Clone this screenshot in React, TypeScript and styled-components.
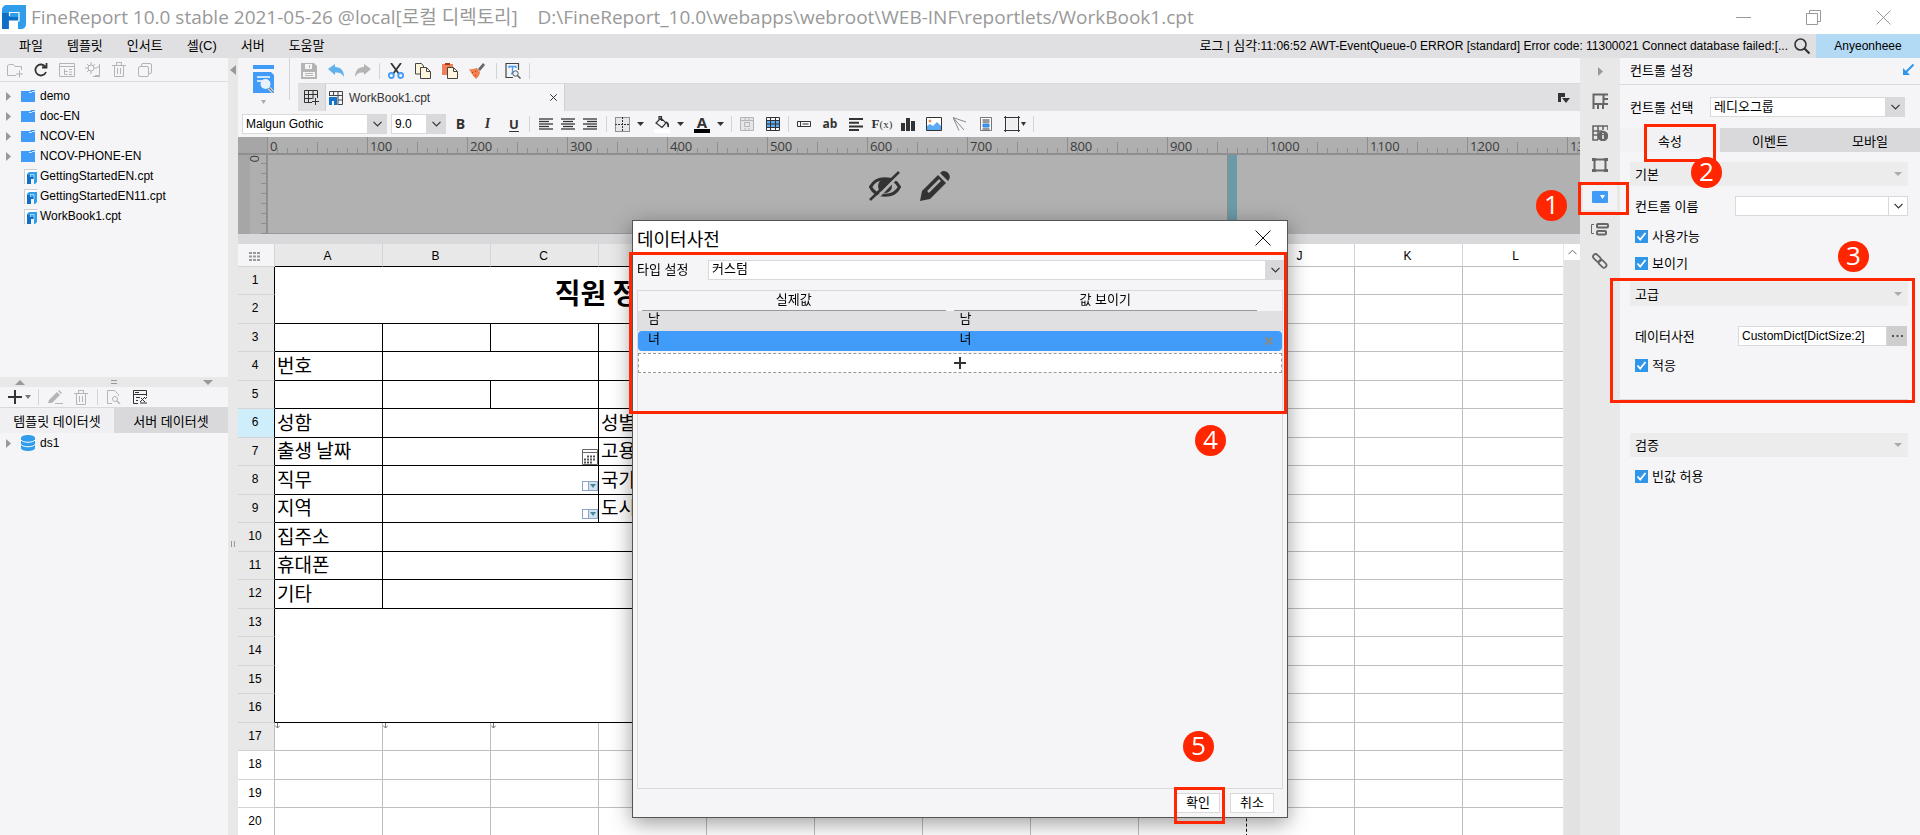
import React from "react";
import styled, { createGlobalStyle, css } from "styled-components";

const ui = `"Liberation Sans", "Noto Sans CJK KR", sans-serif`;
const malgun = `"Open Sans", "Noto Sans CJK KR", sans-serif`;

const GlobalStyle = createGlobalStyle`
  * { box-sizing: border-box; }
  body { margin: 0; font-family: ${ui}; font-size: 12px; color: #000; overflow: hidden; }
  button, input, select { font: inherit; color: inherit; margin: 0; }
  button { padding: 0; border: 0; background: none; }
  svg { display: block; flex: none; }
`;

/* ---------- shell ---------- */

const Shell = styled.div`
  display: flex;
  flex-direction: column;
  height: 100vh;
  background: #f5f5f7;
  overflow: hidden;
`;

const TitleBar = styled.header`
  display: flex;
  flex: none;
  align-items: center;
  height: 34px;
  padding-left: 2px;
  background: #fff;
  color: #999;
`;

const WindowTitle = styled.h1`
  flex: 1;
  margin: 0 0 0 5px;
  font-family: ${malgun};
  font-size: 19px;
  font-weight: 400;
  line-height: 34px;
  white-space: pre;
`;

const WindowButton = styled.button`
  display: flex;
  align-items: center;
  justify-content: center;
  width: 70px;
  height: 32px;
  color: #999;
  &:last-child { margin-right: 2px; }
`;

const MenuBar = styled.nav`
  display: flex;
  flex: none;
  align-items: center;
  height: 24px;
  padding-left: 7px;
  background: #e0e0e2;
`;

const MenuItem = styled.button`
  padding: 0 12px;
  font-size: 13px;
  line-height: 22px;
`;

const LogText = styled.span`
  margin-left: auto;
  line-height: 22px;
  b { font-size: 13px; font-weight: 400; }
`;

const SearchButton = styled.button`
  display: flex;
  align-items: center;
  justify-content: center;
  width: 28px;
  height: 24px;
  color: #333;
`;

const UserButton = styled.button`
  width: 104px;
  height: 24px;
  background: #b2daf4;
`;

const Body = styled.div`
  display: flex;
  flex: 1;
  min-height: 0;
`;

/* ---------- shared controls ---------- */

const Bar = styled.div<{ $h: number; $pad?: number }>`
  display: flex;
  flex: none;
  align-items: center;
  height: ${(p) => p.$h}px;
  padding-left: ${(p) => p.$pad ?? 0}px;
`;

const ToolButton = styled.button<{ $w?: number; $tone?: string; $gap?: number }>`
  display: flex;
  flex: none;
  align-items: center;
  justify-content: center;
  gap: ${(p) => p.$gap ?? 7}px;
  width: ${(p) => p.$w ?? 26}px;
  height: 22px;
  color: ${(p) => p.$tone ?? "#333"};
`;

const NewTabButton = styled.button`
  display: flex;
  align-items: center;
  justify-content: center;
  width: 27px;
  color: #333;
`;

const Divider = styled.i<{ $h?: number; $gap?: number }>`
  flex: none;
  width: 1px;
  height: ${(p) => p.$h ?? 16}px;
  margin: 0 ${(p) => p.$gap ?? 3}px;
  background: #d4d4d6;
`;

const SelectFrame = styled.div<{ $w?: number; $plain?: boolean; $korean?: boolean }>`
  position: relative;
  display: flex;
  flex: ${(p) => (p.$w ? "none" : "1")};
  width: ${(p) => (p.$w ? p.$w + "px" : "auto")};
  height: 20px;
  border: 1px solid #d9d9db;
  background: #fff;
  select {
    width: 100%;
    padding: 0 22px ${(p) => (p.$korean ? 2 : 0)}px 3px;
    border: 0;
    outline: 0;
    appearance: none;
    background: none;
    font-size: ${(p) => (p.$korean ? 13 : 12)}px;
  }
  span {
    position: absolute;
    top: 0;
    right: 0;
    display: flex;
    align-items: center;
    justify-content: center;
    width: 19px;
    height: 18px;
    pointer-events: none;
    background: ${(p) => (p.$plain ? "#fff" : "#d9d9db")};
    border-left: 1px solid #d9d9db;
  }
`;

function Select(props: { label: string; value: string; w?: number; plain?: boolean; korean?: boolean }) {
  return (
    <SelectFrame $w={props.w} $plain={props.plain} $korean={props.korean}>
      <select aria-label={props.label}>
        <option>{props.value}</option>
      </select>
      <span>
        <svg width="9" height="6" viewBox="0 0 9 6" fill="none" stroke="#333" strokeWidth="1.2">
          <path d="M.5.8 4.5 4.8 8.5.8" />
        </svg>
      </span>
    </SelectFrame>
  );
}

/* ---------- callouts ---------- */

const Callout = styled.b<{ $x: number; $y: number }>`
  position: absolute;
  left: ${(p) => p.$x}px;
  top: ${(p) => p.$y}px;
  z-index: 5;
  width: 31px;
  height: 31px;
  border-radius: 50%;
  background: #ff2600;
  color: #fff;
  font-family: ${malgun};
  font-size: 26px;
  font-weight: 400;
  line-height: 29px;
  text-align: center;
`;

const Outline = styled.i<{ $x: number; $y: number; $w: number; $h: number }>`
  position: absolute;
  left: ${(p) => p.$x}px;
  top: ${(p) => p.$y}px;
  z-index: 4;
  width: ${(p) => p.$w}px;
  height: ${(p) => p.$h}px;
  border: 3px solid #ff2600;
  pointer-events: none;
`;

/* ---------- left side ---------- */

const LeftPane = styled.aside`
  display: flex;
  flex: none;
  flex-direction: column;
  width: 228px;
`;

const Tree = styled.ul`
  flex: none;
  height: 296px;
  margin: 0;
  padding: 4px 0 0;
  border-top: 1px solid #dcdcde;
  list-style: none;
`;

const TreeRow = styled.li`
  display: flex;
  align-items: center;
  height: 20px;
  padding-left: 6px;
`;

const Twisty = styled.span`
  width: 15px;
`;

const NodeIcon = styled.span<{ $file?: boolean }>`
  width: 19px;
  padding-left: ${(p) => (p.$file ? 3 : 0)}px;
`;

const Splitter = styled.div`
  display: flex;
  flex: none;
  align-items: center;
  justify-content: space-between;
  height: 10px;
  padding: 0 15px;
  background: #e8e8e8;
`;

const SideTabs = styled.div`
  display: flex;
  height: 26px;
  border-top: 1px solid #d9d9db;
`;

const SideTab = styled.button<{ $on?: boolean }>`
  flex: 1;
  background: ${(p) => (p.$on ? "#f0f0f2" : "#d9d9db")};
  font-size: 13px;
`;

const Gutter = styled.div`
  display: flex;
  flex: none;
  flex-direction: column;
  align-items: center;
  justify-content: space-between;
  width: 10px;
  padding: 7px 0 288px;
  background: #e8e8e8;
`;

/* ---------- workspace ---------- */

const Workspace = styled.main`
  display: flex;
  flex: 1;
  flex-direction: column;
  min-width: 0;
  overflow: hidden;
`;

const TopTools = styled.div`
  display: flex;
  flex: none;
  height: 53px;
`;

const PreviewButton = styled.button`
  display: flex;
  flex: none;
  flex-direction: column;
  align-items: center;
  gap: 7px;
  width: 51px;
  height: 53px;
  padding: 7px 0 0 0;
`;

const TopRight = styled.div`
  display: flex;
  flex: 1;
  flex-direction: column;
  min-width: 0;
  margin-left: 8px;
`;

const Tabs = styled.div`
  display: flex;
  height: 28px;
  border-top: 1px solid #d9d9db;
  background: #e0e0e2;
`;

const FileTab = styled.div`
  display: flex;
  align-items: center;
  gap: 6px;
  width: 240px;
  padding: 0 7px 0 3px;
  border: solid #cfcfd1;
  border-width: 0 1px;
  background: #f5f5f7;
  color: #333;
  button { margin-left: auto; }
`;

const TabEnd = styled.button`
  margin: 0 10px 0 auto;
`;

const FontSize = styled.div`
  display: flex;
  margin: 0 1px 0 4px;
`;

const Glyph = styled.span<{ $serif?: boolean; $italic?: boolean; $under?: boolean; $size?: number }>`
  font-family: ${(p) => (p.$serif ? `"Liberation Serif", serif` : `"Open Sans", sans-serif`)};
  font-size: ${(p) => p.$size ?? 13}px;
  font-style: ${(p) => (p.$italic ? "italic" : "normal")};
  font-weight: 700;
  line-height: 16px;
  text-decoration: ${(p) => (p.$under ? "underline" : "none")};
  text-underline-offset: 2px;
  small { font-size: 11px; font-weight: 400; }
`;

const InkStack = styled.span<{ $ink: string }>`
  display: flex;
  flex-direction: column;
  align-items: center;
  justify-content: center;
  width: 16px;
  height: 17px;
  border-bottom: 4px solid ${(p) => p.$ink};
`;

const Canvas = styled.section`
  position: relative;
  display: flex;
  flex: none;
  flex-direction: column;
  height: 97px;
  background: #b1b1b1;
`;

const Ruler = styled.div`
  display: flex;
  height: 18px;
  padding-left: 29px;
  background: linear-gradient(90deg, #a6a6a6 29px, #afafaf 29px);
  border-bottom: 2px solid #8f8f8f;
  overflow: hidden;
`;

const RulerMark = styled.span`
  flex: none;
  width: 100px;
  height: 16px;
  padding-left: 3px;
  background:
    linear-gradient(#8e8e8e, #8e8e8e) 0 0 / 1px 16px no-repeat,
    linear-gradient(#8e8e8e, #8e8e8e) 50px 100% / 1px 11px no-repeat,
    repeating-linear-gradient(90deg, #8e8e8e 0 1px, transparent 1px 10px) 0 100% / 100px 5px no-repeat;
  color: #3c3c3c;
  font-family: ${malgun};
  font-size: 13px;
  line-height: 18px;
`;

const CanvasBody = styled.div`
  display: flex;
  flex: 1;
`;

const SideRuler = styled.div`
  display: flex;
  align-items: flex-start;
  justify-content: flex-end;
  width: 30px;
  padding-right: 3px;
  border-right: 2px solid #8f8f8f;
  background:
    repeating-linear-gradient(#afafaf00 0 8px, #8e8e8e 8px 9px, #afafaf00 9px 10px) 100% 0 / 5px 100% no-repeat,
    linear-gradient(90deg, #a6a6a6 12px, #afafaf 12px);
  color: #3c3c3c;
  font-family: ${malgun};
  font-size: 13px;
  line-height: 16px;
  span { writing-mode: vertical-rl; }
`;

const Paper = styled.div`
  width: 960px;
  border-right: 1px solid #8f8f8f;
  border-bottom: 1px solid #999;
`;

const PaperEdge = styled.div`
  width: 9px;
  background: #6b9ba9;
`;

const CanvasActions = styled.div`
  position: absolute;
  inset: 0;
  display: flex;
  align-items: center;
  justify-content: center;
  gap: 19px;
  color: #333;
`;

const Sheet = styled.section`
  display: flex;
  flex: 1;
  min-height: 0;
  border-top: 10px solid #d9d9db;
  background: #fff;
`;

const SheetView = styled.div`
  flex: 1;
  min-width: 0;
  overflow: hidden;
`;

const GridTable = styled.table`
  width: 1333px;
  border-collapse: separate;
  border-spacing: 0;
  table-layout: fixed;
`;

const ColHead = styled.th<{ $used?: boolean; $ink?: boolean }>`
  height: 23px;
  padding: 2px 2px 0 0;
  border-right: 1px solid #d4d4d6;
  border-bottom: 1px solid ${(p) => (p.$ink ? "#000" : "#bdbdbd")};
  background: ${(p) => (p.$used ? "#e8e8e8" : "#fff")};
  font-size: 12px;
  font-weight: 400;
`;

const CornerHead = styled.th`
  width: 37px;
  padding: 3px 0 0 11px;
  border-right: 1px solid #d4d4d6;
  border-bottom: 1px solid #d4d4d6;
  background: #f5f5f7;
`;

const RowHead = styled.th<{ $state: "used" | "active" | "free"; $ink?: boolean; $tall?: boolean }>`
  height: ${(p) => (p.$tall ? 29 : 28)}px;
  padding: 0 2px 2px 0;
  border-right: 1px solid ${(p) => (p.$ink ? "#000" : "#bdbdbd")};
  border-bottom: 1px solid #d4d4d6;
  background: ${(p) => ({ used: "#e8e8e8", active: "#cfeefc", free: "#fff" })[p.$state]};
  font-size: 12px;
  font-weight: 400;
`;

const Cell = styled.td<{ $ink?: boolean; $title?: boolean; $edge?: boolean; $top?: boolean; $widget?: boolean }>`
  padding: 0 0 3px 2px;
  border: solid ${(p) => (p.$ink ? "#000" : "#bdbdbd")};
  border-width: 0 1px 1px 0;
  overflow: hidden;
  font-family: "Noto Sans CJK KR", sans-serif;
  font-size: 19px;
  line-height: 24px;
  white-space: nowrap;
  ${(p) => p.$edge && css`border-right: 1px dashed #000;`}
  ${(p) => p.$top && css`padding: 0; vertical-align: top;`}
  ${(p) => p.$widget && css`padding: 0; vertical-align: bottom; svg { margin-left: auto; }`}
  ${(p) => p.$title && css`padding: 0 4px 6px 0; font-size: 28px; font-weight: 700; line-height: 40px; text-align: center;`}
`;

const ScrollTrack = styled.div`
  flex: none;
  width: 17px;
  border-left: 1px solid #e8e8e8;
  background: #e2e2e2;
`;

const ScrollArrow = styled.button`
  display: flex;
  align-items: center;
  justify-content: center;
  width: 16px;
  height: 16px;
  background: #fff;
`;

/* ---------- right side ---------- */

const Rail = styled.nav`
  position: relative;
  z-index: 4;
  display: flex;
  flex: none;
  flex-direction: column;
  align-items: center;
  width: 40px;
  background: #e8e8e8;
`;

const RailButton = styled.button<{ $on?: boolean; $h?: number }>`
  position: relative;
  display: flex;
  align-items: center;
  justify-content: center;
  width: 40px;
  height: ${(p) => p.$h ?? 32}px;
  color: #666;
  ${(p) => p.$on && css`background: linear-gradient(#f3f3f5, #f3f3f5) 50% 50% / 34px 26px no-repeat;`}
`;

const Panel = styled.aside`
  position: relative;
  z-index: 5;
  flex: none;
  width: 300px;
  font-size: 13px;
`;

const PanelTitle = styled.h2`
  display: flex;
  align-items: center;
  justify-content: space-between;
  height: 27px;
  margin: 0;
  padding: 0 6px 3px 10px;
  border-bottom: 1px solid #d9d9db;
  font-size: 13px;
  font-weight: 400;
`;

const Field = styled.div<{ $top: number; $label: number; $indent?: number; $end?: number }>`
  display: flex;
  align-items: center;
  height: 20px;
  margin: ${(p) => p.$top}px ${(p) => p.$end ?? 0}px 0 ${(p) => p.$indent ?? 0}px;
  > label { flex: none; width: ${(p) => p.$label}px; padding-bottom: 2px; }
`;

const PanelTabs = styled.div`
  display: flex;
  height: 24px;
  margin: 11px 0 10px;
`;

const PanelTab = styled.button<{ $on?: boolean }>`
  position: relative;
  flex: 1;
  background: ${(p) => (p.$on ? "#f2f2f4" : "#d9d9db")};
`;

const Section = styled.section<{ $top?: number }>`
  position: relative;
  margin: ${(p) => p.$top ?? 0}px 12px 0 10px;
`;

const SectionHead = styled.button`
  display: flex;
  align-items: center;
  justify-content: space-between;
  width: 100%;
  height: 24px;
  padding: 0 6px 1px 5px;
  background: #ececec;
`;

const CheckLabel = styled.label<{ $top: number }>`
  display: flex;
  align-items: center;
  gap: 4px;
  height: 20px;
  margin: ${(p) => p.$top}px 0 0 5px;
  padding-bottom: 1px;
  input {
    width: 13px;
    height: 13px;
    appearance: none;
    background: #2f96ea;
    grid-area: 1 / 1;
  }
  span { display: grid; place-items: center; padding-top: 1px; }
  svg { grid-area: 1 / 1; pointer-events: none; z-index: 1; }
`;

const TextField = styled.input`
  flex: 1;
  min-width: 0;
  height: 20px;
  padding: 0 3px;
  border: 1px solid #d9d9db;
  background: #fff;
  font-size: 12px;
`;

const MoreButton = styled.button`
  display: flex;
  align-items: center;
  justify-content: center;
  width: 20px;
  height: 20px;
  background: #cecece;
`;

const Rule = styled.hr`
  height: 1px;
  margin: 24px 0 0 -10px;
  border: 0;
  background: #d9d9db;
`;

/* ---------- dialog ---------- */

const Dialog = styled.section`
  position: fixed;
  top: 220px;
  left: calc(50% - 328px);
  z-index: 2;
  display: flex;
  flex-direction: column;
  width: 656px;
  height: 598px;
  border: 1px solid #555;
  background: #f5f5f7;
  box-shadow: 0 5px 20px rgba(0, 0, 0, 0.4);
`;

const DialogTitle = styled.h2`
  display: flex;
  flex: none;
  align-items: center;
  justify-content: space-between;
  height: 34px;
  margin: 0;
  padding: 0 16px 0 4px;
  background: #fff;
  font-family: "Noto Sans CJK KR", sans-serif;
  font-size: 18px;
  font-weight: 400;
`;

const DialogField = styled.div`
  display: flex;
  align-items: center;
  margin: 4px 2px 10px 4px;
  font-size: 13px;
  label { width: 71px; padding-bottom: 2px; }
`;

const DictBox = styled.div`
  flex: 1;
  margin: 0 4px;
  border: 1px solid #d9d9db;
`;

const DictTable = styled.table`
  width: 100%;
  border-collapse: separate;
  border-spacing: 0;
  table-layout: fixed;
  font-size: 13px;
  th {
    height: 20px;
    padding: 0 4px;
    font-weight: 400;
  }
  th span {
    display: block;
    height: 20px;
    line-height: 18px;
    border-bottom: 1px solid #999;
  }
  th:last-child { width: 21px; }
  td { height: 20px; padding: 0 0 4px 10px; line-height: 16px; }
  td:last-child { padding: 0 0 0 4px; }
`;

const DictRow = styled.tr<{ $on?: boolean }>`
  td { background: ${(p) => (p.$on ? "#419bf9" : "#e0e0e2")}; }
  ${(p) => p.$on && css`
    td:first-child { border-radius: 4px 0 0 4px; }
    td:last-child { border-radius: 0 4px 4px 0; }
  `}
`;

const AddRow = styled.button`
  display: flex;
  align-items: center;
  justify-content: center;
  width: 100%;
  height: 20px;
  margin-top: 2px;
  border: 1px dashed #999;
  background: #fff;
  color: #333;
`;

const DialogFooter = styled.footer`
  display: flex;
  flex: none;
  justify-content: flex-end;
  gap: 10px;
  padding: 4px 13px 4px;
`;

const DialogButton = styled.button`
  position: relative;
  width: 44px;
  height: 20px;
  border: 1px solid #d9d9db;
  background: #fff;
  font-size: 13px;
  line-height: 16px;
`;

/* ---------- icons ---------- */

type Kids = { children?: React.ReactNode; w?: number; h?: number; sw?: number };

function Line({ children, w = 16, h = 16, sw = 1 }: Kids) {
  return (
    <svg width={w} height={h} viewBox={`0 0 ${w} ${h}`} fill="none" stroke="currentColor" strokeWidth={sw}>
      {children}
    </svg>
  );
}

const Caret = ({ c = "#333", w = 7 }: { c?: string; w?: number }) => (
  <svg width={w} height="4" viewBox="0 0 7 4" preserveAspectRatio="none"><path d="M0 0h7L3.500 4z" fill={c} /></svg>
);

const RightTri = () => (
  <svg width="5" height="9" viewBox="0 0 5 9"><path d="M0 0 5 4.500 0 9z" fill="#999" /></svg>
);

const Logo = () => (
  <svg width="24" height="24" viewBox="0 0 24 24">
    <path d="M5 0h19v19c0 3-2 5-5 5h-3v-8H8v8H0V5c0-3 2-5 5-5z" fill="#2f9cec" />
    <path d="M0 8h7v4h9v4H8v8H0z" fill="#0f6fc6" />
    <path d="M7.500 11V7.500H17V16H7.500v8" fill="none" stroke="#fff" strokeWidth="1.2" />
  </svg>
);

const FileIcon = () => (
  <svg width="13" height="15" viewBox="0 0 13 15">
    <path d="M.5 15V.5H13" fill="#fff" stroke="#ccc" />
    <path d="M3 5l2-2h8v10l-2 2h-1v-5H7v5H3z" fill="#2f9cec" />
    <path d="M3 6h3v2h4v2H7v5H3z" fill="#0f6fc6" />
    <path d="M6.500 8V5.500H10V10" fill="none" stroke="#fff" strokeWidth=".6" />
  </svg>
);

const FolderIcon = () => (
  <svg width="14" height="12" viewBox="0 0 14 12">
    <path d="M0 1h9l1-1h4v12H0z" fill="#419bf9" />
    <path d="M8 2.500h2.500l1-1H14" stroke="#fff" strokeWidth=".8" fill="none" />
  </svg>
);

const DbIcon = () => (
  <svg width="14" height="16" viewBox="0 0 14 16">
    <path d="M0 3c0-4 14-4 14 0v10c0 4-14 4-14 0z" fill="#2f9cec" />
    <path d="M0 5c2 3 12 3 14 0M0 9.500c2 3 12 3 14 0" stroke="#fff" fill="none" />
  </svg>
);

const Trash = () => (
  <Line w={14} h={15}><path d="M0 3.500h14M4.500 3V.5h5V3M2.500 4v10.500h9V4M5.500 6v6M8.500 6v6" /></Line>
);

const AlignIcon = ({ from, to }: { from: number; to: number }) => (
  <Line w={14} h={13}>
    {[0, 1, 2, 3, 4].map((i) => (
      <path key={i} d={`M${i % 2 ? from : 0} ${i * 2.5 + 1}H${i % 2 ? to : 14}`} strokeWidth="1.3" />
    ))}
  </Line>
);

const Check = () => (
  <svg width="11" height="11" viewBox="0 0 11 11" fill="none" stroke="#fff" strokeWidth="1.8"><path d="M1.500 5.500 4.200 8.500 9.500 2" /></svg>
);

const ComboIcon = () => (
  <svg width="16" height="16" viewBox="0 0 16 16">
    <rect x=".5" y="3.500" width="15" height="9" fill="#fff" stroke="#8fa3c8" />
    <rect x="7" y="4" width="8" height="8" fill="#cfe4ee" />
    <path d="M6.500 4v8" stroke="#8fa3c8" />
    <path d="M8 6h6l-3 4z" fill="#4a8797" />
  </svg>
);

const CalendarIcon = () => (
  <svg width="16" height="16" viewBox="0 0 16 16" fill="none" stroke="#666">
    <path d="M.5.5h15v15H.5zM0 3.500h16" />
    <path d="M5 7.500h8M2 10.500h11M2 13.500h8" stroke="#555" strokeWidth="2" strokeDasharray="2 1" />
  </svg>
);

const ArrowMark = () => (
  <svg width="5" height="6" viewBox="0 0 5 6" fill="none" stroke="#777"><path d="M2.500 0v5M0 2.500l2.500 2.500L5 2.500" /></svg>
);

const CloseX = ({ s = 15, c = "currentColor", sw = 1 }: { s?: number; c?: string; sw?: number }) => (
  <svg width={s} height={s} viewBox="0 0 15 15" stroke={c} strokeWidth={(sw * 15) / s}><path d="M.5.5l14 14M14.500.5l-14 14" /></svg>
);

/* ---------- parts ---------- */

function CheckBox({ text, top }: { text: string; top: number }) {
  return (
    <CheckLabel $top={top}>
      <span><input type="checkbox" defaultChecked /><Check /></span>
      {text}
    </CheckLabel>
  );
}

function LeftSide() {
  const g = "#b4b4b4";
  return (
    <LeftPane>
      <Bar $h={23} $pad={2}>
        <ToolButton $tone={g} aria-label="New folder"><Line><path d="M9 13.500H.5v-10l2-1h4l1.500 2h6.500V8M12.500 8.500v7M9 12h7" /></Line></ToolButton>
        <ToolButton aria-label="Refresh"><Line sw={1.8}><path d="M12.500 5A5.500 5.500 0 1 0 13 10M13.500 1v4.500H9" /></Line></ToolButton>
        <ToolButton $tone={g} aria-label="Locate"><Line><path d="M.5 1.500h15v13H.5zM.5 4.500h15M5.500 7v5.500h3M5.500 9.500h3M10 7.500h3M10 10h3M10 12.500h3" /></Line></ToolButton>
        <ToolButton $tone={g} aria-label="Settings"><Line><circle cx="6" cy="6" r="3" /><path d="M6 0v3M6 9v3M0 6h3M9 6h3M2 2l2 2M10 2 8 4M2 10l2-2M14.500 2v11.500H10M12 5h2M8 14.500h7" /></Line></ToolButton>
        <ToolButton $tone={g} aria-label="Delete"><Trash /></ToolButton>
        <ToolButton $tone={g} aria-label="Copy"><Line w={14} h={14}><path d="M3.500 3V2q0-1.500 1.500-1.500h7q1.500 0 1.500 1.500v7q0 1.500-1.500 1.500h-1" /><rect x=".5" y="3.500" width="10" height="10" rx="1.500" /></Line></ToolButton>
      </Bar>
      <Tree>
        {["demo", "doc-EN", "NCOV-EN", "NCOV-PHONE-EN"].map((n) => (
          <TreeRow key={n}><Twisty><RightTri /></Twisty><NodeIcon><FolderIcon /></NodeIcon>{n}</TreeRow>
        ))}
        {["GettingStartedEN.cpt", "GettingStartedEN11.cpt", "WorkBook1.cpt"].map((n) => (
          <TreeRow key={n}><Twisty /><NodeIcon $file><FileIcon /></NodeIcon>{n}</TreeRow>
        ))}
      </Tree>
      <Splitter>
        <svg width="10" height="5" viewBox="0 0 10 5"><path d="M0 5h10L5 0z" fill="#999" /></svg>
        <Line w={6} h={4}><path d="M0 .5h6M0 3.500h6" stroke="#999" /></Line>
        <svg width="10" height="5" viewBox="0 0 10 5"><path d="M0 0h10L5 5z" fill="#999" /></svg>
      </Splitter>
      <Bar $h={20} $pad={4}>
        <ToolButton $w={31} $gap={3} aria-label="Add dataset">
          <Line w={14} h={14} sw={2}><path d="M7 0v14M0 7h14" /></Line>
          <Caret c="#777" w={6} />
        </ToolButton>
        <Divider />
        <ToolButton $tone={g} aria-label="Edit">
          <svg width="15" height="14" viewBox="0 0 15 14" fill="currentColor"><path d="M1 10 9 2l3 3-8 8H0zM10 1l1-1 3 3-1 1zM7 13h8v1H7z" /></svg>
        </ToolButton>
        <ToolButton $tone={g} aria-label="Remove"><Trash /></ToolButton>
        <Divider />
        <ToolButton $tone={g} aria-label="Preview"><Line w={14} h={14}><path d="M5 13.500H.5V.5h7l4 4V6" /><circle cx="8" cy="9" r="2.500" /><path d="m10 11 3 3" strokeWidth="1.5" /></Line></ToolButton>
        <ToolButton aria-label="Connection"><Line w={15} h={14}><path d="M5 13.500H.5V.5h13V6M.5 4.500h13M2 2.500h4M3 7.500h4M3 10.500h2M7 12l5-5M8 8l4 4M12 9l2-2M7 13h7" /></Line></ToolButton>
      </Bar>
      <SideTabs>
        <SideTab $on>템플릿 데이터셋</SideTab>
        <SideTab>서버 데이터셋</SideTab>
      </SideTabs>
      <TreeRow as="div"><Twisty><RightTri /></Twisty><NodeIcon><DbIcon /></NodeIcon>ds1</TreeRow>
    </LeftPane>
  );
}

function QuickTools() {
  return (
    <Bar $h={25}>
      <ToolButton $w={22} aria-label="Save"><svg width="16" height="16" viewBox="0 0 16 16"><path d="M0 0h13l3 3v13H0z" fill="#b4b4b4" /><path d="M4 1h7v5H4zM2 9h12v5H2z" fill="#f5f5f7" /><path d="M8.500 2v3M4 10.500h8M4 12.500h8" stroke="#b4b4b4" /></svg></ToolButton>
      <ToolButton $w={32} aria-label="Undo"><svg width="16" height="14" viewBox="0 0 16 14"><path d="M0 5 7 0v3c6 0 9 4 9 10-2-4-5-5-9-4.500V11z" fill="#62b0ee" /></svg></ToolButton>
      <ToolButton $w={22} aria-label="Redo"><svg width="16" height="14" viewBox="0 0 16 14"><path d="M16 5 9 0v3C3 3 0 7 0 13c2-4 5-5 9-4.500V11z" fill="#b4b4b4" /></svg></ToolButton>
      <Divider $gap={5} />
      <ToolButton $w={22} aria-label="Cut"><svg width="16" height="16" viewBox="0 0 16 16" fill="none"><path d="m3 0 8 11M13 0 5 11" stroke="#333" strokeWidth="1.8" /><circle cx="3.300" cy="12.500" r="2.500" stroke="#419bf9" strokeWidth="1.8" /><circle cx="12.700" cy="12.500" r="2.500" stroke="#419bf9" strokeWidth="1.8" /></svg></ToolButton>
      <ToolButton $w={32} aria-label="Copy"><svg width="16" height="16" viewBox="0 0 16 16" fill="#fff6dd" stroke="#444"><path d="M.5.5h6l2 2.500v8H.5z" /><path d="M5.500 4.500h6l4 4v7h-10z" /><path d="M11.500 5v3.500H15" fill="none" /></svg></ToolButton>
      <ToolButton $w={22} aria-label="Paste"><svg width="16" height="16" viewBox="0 0 16 16"><path d="M0 1h11v11H0z" fill="#f08058" /><path d="M3 0h5v2H3z" fill="#a83c10" /><path d="M5.500 4.500h6l4 4v7h-10z" fill="#fff6dd" stroke="#444" /><path d="M11.500 5v3.500H15" fill="none" stroke="#444" /></svg></ToolButton>
      <ToolButton $w={32} aria-label="Format painter"><svg width="16" height="16" viewBox="0 0 16 16"><path d="m14 0 2 2-5 6-2-2z" fill="#666" /><path d="M0 6c4 1 6-1 8-1l3 4c0 3-2 5-4 7C4 13 2 10 0 6z" fill="#f08050" /><path d="m3 9 1 1M6 8l1 1M6 12l1 1" stroke="#a83c10" /></svg></ToolButton>
      <Divider $gap={3} />
      <ToolButton aria-label="Find"><svg width="16" height="16" viewBox="0 0 16 16" fill="none"><path d="M13.500 7V.5H1v14h7" stroke="#444" strokeWidth="1.2" /><path d="M4 5V3.500h7V5M7.500 3.500v7M6 10.500h3" stroke="#419bf9" strokeWidth="1.3" /><circle cx="10.500" cy="10.500" r="2.700" stroke="#555" fill="#eef" /><path d="m12.500 12.500 3 3" stroke="#555" strokeWidth="1.5" /></svg></ToolButton>
      <Divider />
    </Bar>
  );
}

function FormatTools() {
  return (
    <Bar $h={26} $pad={4}>
      <Select label="Font" value="Malgun Gothic" w={145} />
      <FontSize><Select label="Font size" value="9.0" w={55} /></FontSize>
      <ToolButton $w={27} aria-label="Bold"><Glyph $size={14}>B</Glyph></ToolButton>
      <ToolButton $w={27} aria-label="Italic"><Glyph $serif $italic $size={14}>I</Glyph></ToolButton>
      <ToolButton aria-label="Underline"><Glyph $under>U</Glyph></ToolButton>
      <Divider $gap={2} />
      <ToolButton $w={28} aria-label="Align left"><AlignIcon from={0} to={10} /></ToolButton>
      <ToolButton $w={16} aria-label="Align center"><AlignIcon from={2} to={12} /></ToolButton>
      <ToolButton $w={28} aria-label="Align right"><AlignIcon from={4} to={14} /></ToolButton>
      <Divider $gap={2} />
      <ToolButton $w={40} aria-label="Borders"><Line w={15} h={15}><path d="M.5.5h14v14H.5z" fill="#e6e6e8" strokeDasharray="1 1" /><path d="M7.500 0v15M0 7.500h15" strokeDasharray="2 1" /></Line><Caret /></ToolButton>
      <ToolButton $w={40} aria-label="Fill">
        <InkStack $ink="#fff"><Line w={14} h={12} sw={1.2}><path d="M1 7 6 2l5 5-4 4.500zM4 4V.600h2.500V5" /><path d="M11 6c2 1 2.500 3 2 5" strokeWidth="1.8" /></Line></InkStack><Caret />
      </ToolButton>
      <ToolButton $w={40} aria-label="Font color"><InkStack $ink="#000"><Glyph $size={15}>A</Glyph></InkStack><Caret /></ToolButton>
      <Divider $gap={2} />
      <ToolButton $tone="#b4b4b4" aria-label="Merge"><Line w={14} h={14}><path d="M.5.5h13v13H.5zM0 3.500h14M5 1v2M9 1v2M5 11v2M9 11v2M4.500 5.500h5v4h-5z" fill="#e6e6e8" /></Line></ToolButton>
      <ToolButton aria-label="Table"><Line w={14} h={14}><path d="M0 4h14v6H0z" fill="#5aaaf4" stroke="none" /><path d="M.5.5h13v13H.5zM0 3.500h14M0 7h14M0 10.500h14M4.500 0v14M9.500 0v14" /></Line></ToolButton>
      <Divider $gap={2} />
      <ToolButton aria-label="Control"><Line w={14} h={6}><path d="M.5.5h13v5H.5zM3.500 1v4M5.500 3h6" /></Line></ToolButton>
      <ToolButton aria-label="Text"><Glyph $size={12}>ab</Glyph></ToolButton>
      <ToolButton aria-label="Rich text"><Line w={14} h={13} sw={2}><path d="M0 1h14M0 4.700h10M0 8.400h14M0 12h10" /></Line></ToolButton>
      <ToolButton aria-label="Formula"><Glyph $serif $size={13}>F<small>(x)</small></Glyph></ToolButton>
      <ToolButton aria-label="Chart"><svg width="14" height="13" viewBox="0 0 14 13" fill="#333"><path d="M0 5h4v8H0zM5 0h4v13H5zM10 3h4v10h-4z" /></svg></ToolButton>
      <ToolButton aria-label="Image"><svg width="16" height="14" viewBox="0 0 16 14"><path d="M.5.500h15v13H.5z" fill="#fff" stroke="#333" /><path d="M1 13V9l3-2 3 2 4-4 4 4v4z" fill="#5aaaf4" /><circle cx="4" cy="4" r="1.500" fill="#f09060" /></svg></ToolButton>
      <ToolButton $tone="#888" aria-label="Slope line"><Line w={14} h={14}><path d="M13 5 0 .5 11 13M0 .5l6 13" /></Line></ToolButton>
      <ToolButton aria-label="Sub report"><svg width="12" height="14" viewBox="0 0 12 14" fill="none" stroke="#333"><path d="M.5.500h11v13H.5z" fill="#fff" stroke="#777" /><path d="M2.500 3h7M2.500 5h7M2.500 12h7" /><path d="M3 7h6v3H3z" fill="#419bf9" stroke="#2f7fd8" /></svg></ToolButton>
      <ToolButton $w={31} $gap={1} aria-label="Float"><Line w={16} h={16}><path d="M3 3h10v10H3z" fill="#eee" stroke="none" /><path d="M1.500 0v16M14.500 0v16M0 1.500h16M0 14.500h16" /></Line><Caret w={5} /></ToolButton>
      <Divider />
    </Bar>
  );
}

const labels: Record<number, [string, string?]> = {
  4: ["번호"],
  6: ["성함", "성별"],
  7: ["출생 날짜", "고용"],
  8: ["직무", "국가"],
  9: ["지역", "도시"],
  10: ["집주소"],
  11: ["휴대폰"],
  12: ["기타"],
};

/* Plain cells to the right of the report body, up to column L. */
function Rest({ from = 6 }: { from?: number }) {
  return <>{Array.from({ length: 12 - from }, (_, i) => <Cell key={i} $edge={i + from === 8} />)}</>;
}

function ReportCells({ n }: { n: number }) {
  if (n === 1) return <><Cell $ink $title colSpan={6} rowSpan={2}>직원 정</Cell><Rest /></>;
  if (n === 2 || (n > 13 && n < 17)) return <Rest />;
  if (n === 3 || n === 5) return <>{[0, 1, 2, 3, 4, 5].map((i) => <Cell key={i} $ink />)}<Rest /></>;
  if (n === 13) return <><Cell $ink colSpan={6} rowSpan={4} /><Rest /></>;
  if (n === 17) return <>{[0, 1, 2].map((i) => <Cell key={i} $top><ArrowMark /></Cell>)}<Rest from={3} /></>;
  if (n > 17) return <Rest from={0} />;
  const [a, d] = labels[n];
  if (n >= 10) return <><Cell $ink>{a}</Cell><Cell $ink colSpan={5} /><Rest /></>;
  return (
    <>
      <Cell $ink>{a}</Cell>
      <Cell $ink $widget colSpan={2}>{n === 7 ? <CalendarIcon /> : n === 8 || n === 9 ? <ComboIcon /> : null}</Cell>
      <Cell $ink>{d}</Cell>
      <Cell $ink colSpan={2} />
      <Rest />
    </>
  );
}

function Spreadsheet() {
  const rows = Array.from({ length: 20 }, (_, i) => i + 1);
  return (
    <Sheet>
      <SheetView>
        <GridTable>
          <thead>
            <tr>
              <CornerHead><svg width="11" height="9" viewBox="0 0 11 9"><path d="M0 1h11M0 4.500h11M0 8h11" stroke="#999" strokeWidth="2" strokeDasharray="3 1" /></svg></CornerHead>
              {"ABCDEFGHIJKL".split("").map((c, i) => <ColHead key={c} $used={i < 9} $ink={i < 6}>{c}</ColHead>)}
            </tr>
          </thead>
          <tbody>
            {rows.map((n) => (
              <tr key={n}>
                <RowHead $tall={n % 2 === 0} $ink={n < 17} $state={n === 6 ? "active" : n < 18 ? "used" : "free"}>{n}</RowHead>
                <ReportCells n={n} />
              </tr>
            ))}
          </tbody>
        </GridTable>
      </SheetView>
      <ScrollTrack><ScrollArrow aria-label="Scroll up"><Line w={9} h={6}><path d="M.5 5.200l4-4 4 4" stroke="#666" /></Line></ScrollArrow></ScrollTrack>
    </Sheet>
  );
}

function Designer() {
  return (
    <Workspace>
      <TopTools>
        <PreviewButton aria-label="Preview report">
          <svg width="21" height="28" viewBox="0 0 21 28"><path d="M0 0h21v4H0zM0 7h18l3 3v18H0z" fill="#419bf9" /><path d="M4 12h13M4 16h5" stroke="#fff" strokeWidth="1.5" /><circle cx="12.500" cy="19" r="5" fill="#e8f2fa" /><path d="m16 23 4 4" stroke="#fff" strokeWidth="3" /><path d="m16 23 4 4" stroke="#777" strokeWidth="1.5" /></svg>
          <Caret c="#aaa" w={5} />
        </PreviewButton>
        <Divider $h={42} $gap={0} />
        <TopRight>
          <QuickTools />
          <Tabs>
            <NewTabButton aria-label="New workbook"><Line w={15} h={15}><path d="M8 12.500H.5v-12h13V8M.5 4.500h13M.5 8.500h8M4.500 0v13M9 0v9M11.500 8v7M8 11.500h7" /></Line></NewTabButton>
            <FileTab>
              <svg width="14" height="14" viewBox="0 0 14 14"><path d="M.5 5V.5h13v13H9M.5 4.500h13M9 9h5M4.500 0v5M9 0v14" fill="none" stroke="#444" /><path d="M0 6h8v8H5v-4H3v4H0z" fill="#1274cc" /></svg>
              WorkBook1.cpt
              <button aria-label="Close tab"><CloseX s={7} c="#333" /></button>
            </FileTab>
            <TabEnd aria-label="Tab list"><svg width="12" height="10" viewBox="0 0 12 10" fill="#333"><path d="M0 0h7v4H3v5H0zM4 5h8L8 10z" /></svg></TabEnd>
          </Tabs>
        </TopRight>
      </TopTools>
      <FormatTools />
      <Canvas>
        <Ruler>{Array.from({ length: 14 }, (_, i) => <RulerMark key={i}>{i * 100}</RulerMark>)}</Ruler>
        <CanvasBody>
          <SideRuler><span>0</span></SideRuler>
          <Paper />
          <PaperEdge />
        </CanvasBody>
        <CanvasActions>
          <button aria-label="Hide"><svg width="32" height="30" viewBox="0 0 32 30"><path d="M1.500 16C7 5 25 5 30.500 16 25 27 7 27 1.500 16z" fill="none" stroke="#333" strokeWidth="3" /><circle cx="16" cy="15" r="7" fill="#333" /><path d="M4 31 32 2" stroke="#b1b1b1" strokeWidth="3" /><path d="M1 29 30 1" stroke="#333" strokeWidth="2.5" /></svg></button>
          <button aria-label="Edit"><svg width="30" height="30" viewBox="0 0 30 30"><path d="m2 20 16-16 8 8-16 16-10 2z" fill="#333" /><path d="m8 21 12-12" stroke="#b1b1b1" strokeWidth="2.5" /><path d="m20 2 2-1.500c4-2 9 3 7.500 7L28 10z" fill="#333" /></svg></button>
        </CanvasActions>
      </Canvas>
      <Spreadsheet />
    </Workspace>
  );
}

function PropertyRail() {
  return (
    <Rail>
      <RailButton $h={27} aria-label="Collapse"><RightTri /></RailButton>
      <RailButton aria-label="Cell element"><Line sw={2}><path d="M16 1.500H1.500V16M11.500 1.500V11M1 11h15M11 6h5M6 11v5M11 11v5" /></Line></RailButton>
      <RailButton aria-label="Cell attributes"><Line sw={1.6}><path d="M16 5V1H1v14h5M1 6h9M1 10h5M6 1v14M11 1v4" /><circle cx="11" cy="11" r="4.500" fill="#666" /><path d="M11 10v4M11 8v1" stroke="#e8e8e8" /></Line></RailButton>
      <RailButton aria-label="Float element"><Line><path d="M2.500 2.500h11v11h-11z" strokeWidth="2" /><path d="M0 1h4v3H0zM12 1h4v3h-4zM0 12h4v3H0zM12 12h4v3h-4z" fill="currentColor" stroke="none" /></Line></RailButton>
      <RailButton $on aria-label="Control settings">
        <svg width="16" height="12" viewBox="0 0 16 12"><rect width="16" height="12" rx="1" fill="#419bf9" /><path d="M8 4h5l-2.500 4z" fill="#fff" /></svg>
        <Outline $x={-2} $y={1} $w={51} $h={33} />
        <Callout $x={-44} $y={9}>1</Callout>
      </RailButton>
      <RailButton aria-label="Conditions"><Line w={18} h={13} sw={2}><path d="M3 1.500H.5v9H3" strokeWidth="1" /><rect x="6" y="1" width="11" height="3.500" rx="1" /><rect x="6" y="8" width="9" height="3.500" rx="1" /></Line></RailButton>
      <RailButton aria-label="Hyperlink"><Line sw={1.8}><rect x="-4.500" y="-2.500" width="9" height="5" rx="2.500" transform="translate(5 5) rotate(45)" /><rect x="-4.500" y="-2.500" width="9" height="5" rx="2.500" transform="translate(10.500 10.800) rotate(45)" /></Line></RailButton>
    </Rail>
  );
}

function ControlPanel() {
  return (
    <Panel>
      <PanelTitle>
        컨트롤 설정
        <svg width="11" height="11" viewBox="0 0 11 11" fill="#2f96ea"><path d="M0 4v7h7z" /><path d="M10.500.5 3 8" stroke="#2f96ea" strokeWidth="2" /></svg>
      </PanelTitle>
      <Field $top={12} $label={80} $indent={10} $end={15}>
        <label>컨트롤 선택</label>
        <Select label="컨트롤 선택" value="레디오그룹" korean />
      </Field>
      <PanelTabs>
        <PanelTab $on>
          속성
          <Outline $x={24} $y={-4} $w={72} $h={38} />
          <Callout $x={71} $y={29}>2</Callout>
        </PanelTab>
        <PanelTab>이벤트</PanelTab>
        <PanelTab>모바일</PanelTab>
      </PanelTabs>
      <Section>
        <SectionHead>기본<Caret c="#aaa" w={8} /></SectionHead>
        <Field $top={10} $label={100} $indent={5}>
          <label>컨트롤 이름</label>
          <Select label="컨트롤 이름" value="" plain />
        </Field>
        <CheckBox text="사용가능" top={10} />
        <CheckBox text="보이기" top={7} />
      </Section>
      <Section $top={9}>
        <SectionHead>고급<Caret c="#aaa" w={8} /></SectionHead>
        <Field $top={20} $label={103} $indent={5} $end={1}>
          <label htmlFor="dict">데이터사전</label>
          <TextField id="dict" defaultValue="CustomDict[DictSize:2]" />
          <MoreButton aria-label="Edit dictionary"><svg width="11" height="2" viewBox="0 0 11 2"><path d="M0 1h11" stroke="#555" strokeWidth="2" strokeDasharray="2 2.500" /></svg></MoreButton>
        </Field>
        <CheckBox text="적응" top={9} />
        <Rule />
        <Outline $x={-20} $y={-4} $w={305} $h={125} />
        <Callout $x={208} $y={-41}>3</Callout>
      </Section>
      <Section $top={33}>
        <SectionHead>검증<Caret c="#aaa" w={8} /></SectionHead>
        <CheckBox text="빈값 허용" top={9} />
      </Section>
    </Panel>
  );
}

function DictionaryDialog() {
  return (
    <Dialog role="dialog" aria-label="데이터사전">
      <DialogTitle>데이터사전<button aria-label="Close"><CloseX s={16} c="#111" /></button></DialogTitle>
      <DialogField>
        <label>타입 설정</label>
        <Select label="타입 설정" value="커스텀" korean />
      </DialogField>
      <DictBox>
        <DictTable>
          <thead><tr><th><span>실제값</span></th><th><span>값 보이기</span></th><th /></tr></thead>
          <tbody>
            <DictRow><td>남</td><td>남</td><td /></DictRow>
            <DictRow $on><td>녀</td><td>녀</td><td><button aria-label="Remove row"><CloseX s={8} c="#8a8a80" sw={2} /></button></td></DictRow>
          </tbody>
        </DictTable>
        <AddRow aria-label="Add row"><Line w={12} h={12} sw={2}><path d="M6 0v12M0 6h12" /></Line></AddRow>
      </DictBox>
      <DialogFooter>
        <DialogButton>확인<Outline $x={-3} $y={-7} $w={51} $h={37} /></DialogButton>
        <DialogButton>취소</DialogButton>
      </DialogFooter>
      <Outline $x={-4} $y={31} $w={658} $h={162} />
      <Callout $x={562} $y={204}>4</Callout>
      <Callout $x={550} $y={510}>5</Callout>
    </Dialog>
  );
}

export default function App() {
  return (
    <Shell>
      <GlobalStyle />
      <TitleBar>
        <Logo />
        <WindowTitle>{"FineReport 10.0 stable 2021-05-26 @local[로컬 디렉토리]    D:\\FineReport_10.0\\webapps\\webroot\\WEB-INF\\reportlets/WorkBook1.cpt"}</WindowTitle>
        <WindowButton aria-label="Minimize"><Line w={15} h={15}><path d="M0 7.500h15" /></Line></WindowButton>
        <WindowButton aria-label="Restore"><Line w={15} h={15}><path d="M.5 3.500h11v11H.5zM3.500 3V.5h11v11H12" /></Line></WindowButton>
        <WindowButton aria-label="Close"><CloseX /></WindowButton>
      </TitleBar>
      <MenuBar>
        {["파일", "템플릿", "인서트", "셀(C)", "서버", "도움말"].map((m) => <MenuItem key={m}>{m}</MenuItem>)}
        <LogText><b>로그</b> | <b>심각</b>:11:06:52 AWT-EventQueue-0 ERROR [standard] Error code: 11300021 Connect database failed:[...</LogText>
        <SearchButton aria-label="Search"><Line sw={1.6}><circle cx="6.500" cy="6.500" r="5.500" /><path d="m10.500 10.500 5 5" strokeWidth="2.200" /></Line></SearchButton>
        <UserButton>Anyeonheee</UserButton>
      </MenuBar>
      <Body>
        <LeftSide />
        <Gutter>
          <svg width="6" height="10" viewBox="0 0 6 10"><path d="M6 0v10L0 5z" fill="#999" /></svg>
          <svg width="4" height="6" viewBox="0 0 4 6"><path d="M.5 0v6M3.500 0v6" stroke="#999" /></svg>
        </Gutter>
        <Designer />
        <PropertyRail />
        <ControlPanel />
      </Body>
      <DictionaryDialog />
    </Shell>
  );
}
